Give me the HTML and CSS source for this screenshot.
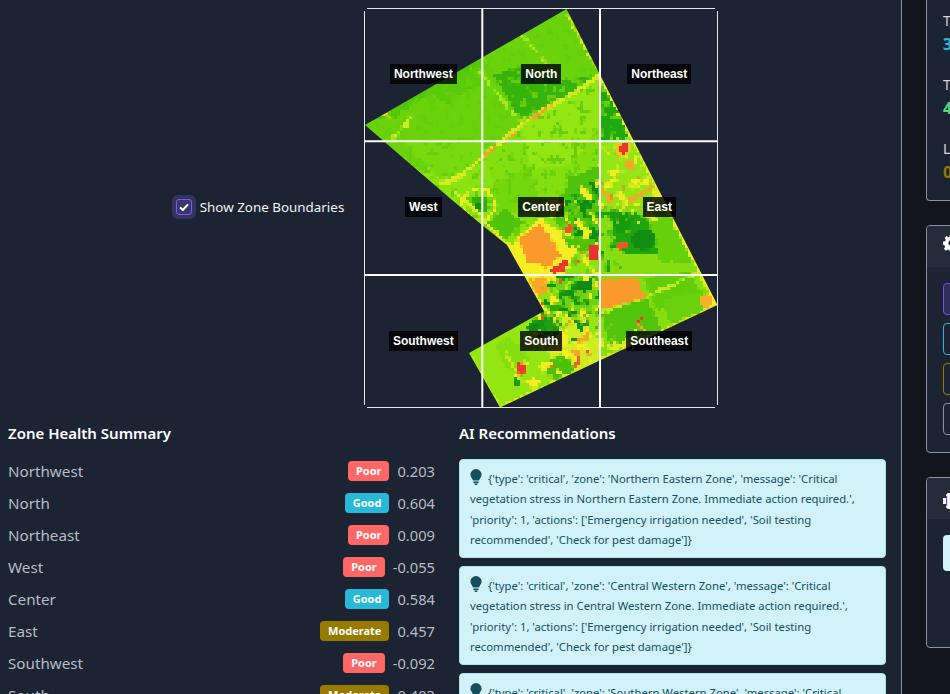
FILE: index.html
```html
<!DOCTYPE html>
<html>
<head>
    <link rel="stylesheet" href="styles.css">
</head>
<body>
    <div class="page">
        <main class="main">
            <div class="map-row">
                <label class="check-label">
                    <span class="check-halo">
                        <span class="check-box">
                            <svg width="10" height="8" viewBox="0 0 10 8"><path d="M1 4.2 3.8 7 9 1.4" fill="none" stroke="#fff" stroke-width="2"/></svg>
                        </span>
                    </span>
                    Show Zone Boundaries
                </label>

                <div class="map-box">
                    <svg class="map-svg" width="354" height="400" viewBox="364 8 354 400">
                        <defs>
                            <clipPath id="field">
                                <polygon points="566.5,9 717.5,305 500,407.5 469,353 544,311 507,245 482,225 452,200 365,125"/>
                            </clipPath>
                            <filter id="rough" x="364" y="8" width="354" height="400" filterUnits="userSpaceOnUse" color-interpolation-filters="sRGB">
                                <feTurbulence type="fractalNoise" baseFrequency="0.16" numOctaves="2" seed="4" result="n"/>
                                <feDisplacementMap in="SourceGraphic" in2="n" scale="6" xChannelSelector="R" yChannelSelector="G" result="d"/>
                                <feFlood x="365" y="9" width="1" height="1"/>
                                <feComposite width="3" height="3"/>
                                <feTile result="t"/>
                                <feComposite in="d" in2="t" operator="in"/>
                                <feMorphology operator="dilate" radius="1"/>
                            </filter>
                            <filter id="fleck" x="364" y="8" width="354" height="400" filterUnits="userSpaceOnUse" color-interpolation-filters="sRGB">
                                <feTurbulence type="fractalNoise" baseFrequency="0.14" numOctaves="2" seed="11"/>
                                <feColorMatrix values="0 0 0 0 0  0 0 0 0 0  0 0 0 0 0  12 0 0 0 -7" result="m"/>
                                <feComposite in="SourceGraphic" in2="m" operator="in"/>
                            </filter>
                            <filter id="blotch-a" x="364" y="8" width="354" height="400" filterUnits="userSpaceOnUse" color-interpolation-filters="sRGB">
                                <feTurbulence type="fractalNoise" baseFrequency="0.1" numOctaves="2" seed="7"/>
                                <feColorMatrix values="0 0 0 0 0  0 0 0 0 0  0 0 0 0 0  12 0 0 0 -6.5" result="m"/>
                                <feComposite in="SourceGraphic" in2="m" operator="in"/>
                            </filter>
                            <filter id="blotch-b" x="364" y="8" width="354" height="400" filterUnits="userSpaceOnUse" color-interpolation-filters="sRGB">
                                <feTurbulence type="fractalNoise" baseFrequency="0.1" numOctaves="2" seed="23"/>
                                <feColorMatrix values="0 0 0 0 0  0 0 0 0 0  0 0 0 0 0  12 0 0 0 -6.4" result="m"/>
                                <feComposite in="SourceGraphic" in2="m" operator="in"/>
                            </filter>
                            <filter id="blotch-c" x="364" y="8" width="354" height="400" filterUnits="userSpaceOnUse" color-interpolation-filters="sRGB">
                                <feTurbulence type="fractalNoise" baseFrequency="0.14" numOctaves="1" seed="31"/>
                                <feColorMatrix values="0 0 0 0 0  0 0 0 0 0  0 0 0 0 0  14 0 0 0 -9.6" result="m"/>
                                <feComposite in="SourceGraphic" in2="m" operator="in"/>
                            </filter>
                        </defs>
                        <g clip-path="url(#field)">
                            <g filter="url(#rough)">
                                <rect x="360" y="4" width="362" height="408" fill="#8be312"/>

                                <!-- north fields -->
                                <polygon points="360,128 570,4 600,72 480,160 420,170" fill="#6ad30b"/>
                                <polygon points="372,118 480,56 484,66 420,100 392,118" fill="#52c60a"/>
                                <polygon points="493,77 520,66 560,82 590,76 575,92 520,120" fill="#36b40c"/>
                                <polygon points="425,88 480,66 482,82 445,105" fill="#5acb0a"/>
                                <polygon points="598,76 636,140 603,140" fill="#1fa80f"/>
                                <polyline points="566,10 580,38 598,70" fill="none" stroke="#d8ec24" stroke-width="3"/>
                                <polyline points="522,36 552,70" fill="none" stroke="#a6ea1c" stroke-width="3"/>
                                <polyline points="478,70 520,122" fill="none" stroke="#a6ea1c" stroke-width="3"/>
                                <polyline points="412,115 402,130 392,138" fill="none" stroke="#cfee22" stroke-width="4"/>
                                <polyline points="384,113 392,120" fill="none" stroke="#f0d020" stroke-width="3"/>

                                <!-- center fields -->
                                <polygon points="484,150 600,80 600,175 540,222 500,210" fill="#84df10"/>
                                <polygon points="520,120 600,80 600,125 570,165 530,170" fill="#93e612"/>
                                <polygon points="400,140 480,140 480,165 440,180" fill="#78da0e"/>
                                <polygon points="484,190 530,165 540,205 500,215" fill="#72d80c"/>

                                <!-- noise over the whole field -->
                                <g filter="url(#fleck)">
                                    <rect x="360" y="4" width="362" height="408" fill="#66ce0c"/>
                                </g>

                                <!-- road -->
                                <polyline points="600,76 575,92 553,104 520,126 493,148 458,178 440,184" fill="none" stroke="#d8ec20" stroke-width="4"/>
                                <polyline points="552,105 524,124" fill="none" stroke="#fa9a2a" stroke-width="2.5"/>
                                <polyline points="515,132 505,139" fill="none" stroke="#fa9a2a" stroke-width="2.5"/>
                                <polyline points="495,148 485,156" fill="none" stroke="#fa9a2a" stroke-width="2.5"/>

                                <circle cx="479" cy="205" r="16" fill="none" stroke="#e6ee22" stroke-width="2.5"/>
                                <circle cx="479" cy="205" r="9" fill="#2fae0c"/>
                                <circle cx="477" cy="205" r="3" fill="#0f8f12"/>
                                <polygon points="484,225 505,208 522,222 505,240" fill="#50c40b"/>
                                <polyline points="454,192 470,204 488,224 507,245" fill="none" stroke="#e6ee22" stroke-width="3"/>

                                <!-- center south, stressed -->
                                <polygon points="570,178 600,165 600,250 570,250 552,215" fill="#4fc20b"/>
                                <polygon points="515,240 540,218 560,232 575,255 565,275 528,292 510,255" fill="#f4ee22"/>
                                <polygon points="518,240 540,224 562,255 545,268 528,262" fill="#fa9a2a"/>
                                <polygon points="552,266 568,260 566,274 552,274" fill="#f0362a"/>
                                <polygon points="527,279 545,276 549,292 536,296" fill="#f7a62a"/>
                                <polygon points="546,300 575,298 570,330 555,325" fill="#2cab0c"/>
                                <polygon points="560,275 600,275 600,310 575,318 552,300" fill="#6ed40c"/>

                                <!-- east -->
                                <polygon points="600,140 634,138 668,205 640,212 600,215" fill="#93e516"/>
                                <polygon points="600,205 680,205 704,272 600,275" fill="#86de10"/>
                                <polygon points="650,222 668,208 700,262 660,262" fill="#66d00b"/>
                                <polygon points="610,220 630,212 648,218 660,255 620,252" fill="#1fa50f"/>
                                <circle cx="643" cy="240" r="11" fill="#108d12"/>
                                <circle cx="622" cy="222" r="10" fill="#159a10"/>

                                <!-- south east fields -->
                                <polygon points="600,275 705,272 725,305 600,360" fill="#86de10"/>
                                <polygon points="644,278 690,272 703,296 655,310" fill="#62cd0b"/>
                                <polygon points="600,313 648,300 662,330 610,345" fill="#52c40b"/>
                                <polygon points="662,300 703,290 708,310 670,325" fill="#6ad20c"/>
                                <polyline points="600,313 648,296 704,270" fill="none" stroke="#c4ec20" stroke-width="2.5"/>
                                <polygon points="600,280 637,276 645,297 600,311" fill="#fa9a2a"/>
                                <polygon points="700,298 712,290 720,306 704,312" fill="#f7b028"/>

                                <!-- south fields -->
                                <polygon points="466,352 544,310 600,316 602,360 500,410" fill="#93e612"/>
                                <polygon points="540,340 570,312 600,340 600,362 570,378 560,370" fill="#cfec20"/>
                                <polygon points="528,322 552,312 565,328 545,335" fill="#1e9f10"/>
                                <polygon points="495,345 510,336 530,360 510,372" fill="#84de10"/>
                                <polygon points="545,362 565,352 575,372 552,385" fill="#4cc00b"/>
                                <polyline points="505,352 522,380" fill="none" stroke="#c8ec20" stroke-width="2.5"/>

                                <!-- patchy stress areas -->
                                <g filter="url(#blotch-a)">
                                    <polygon points="600,140 640,150 668,205 600,205" fill="#eeee22"/>
                                    <polygon points="545,205 600,175 600,275 575,272" fill="#f2ee22"/>
                                    <polygon points="545,275 600,275 600,360 540,390 510,385 530,340" fill="#f2ee22"/>
                                    <polygon points="600,320 660,335 600,362" fill="#e0ec22"/>
                                    <polygon points="600,205 650,205 660,225 610,235" fill="#e8ee22"/>
                                </g>
                                <g filter="url(#blotch-b)">
                                    <polygon points="560,190 600,180 600,240 575,235" fill="#0f8f12"/>
                                    <polygon points="545,275 600,275 600,340 530,345" fill="#129412"/>
                                    <polygon points="600,205 620,205 620,270 600,270" fill="#1a9f10"/>
                                </g>
                                <g filter="url(#blotch-c)">
                                    <polygon points="540,270 600,240 600,360 540,380" fill="#f0502a"/>
                                    <polygon points="600,140 660,175 620,210 600,200" fill="#f08028"/>
                                </g>

                                <!-- single hot spots -->
                                <rect x="616" y="143" width="14" height="13" fill="#f7c020"/>
                                <rect x="620" y="145" width="7" height="8" fill="#e8362a"/>
                                <circle cx="630" cy="165" r="5" fill="#f7a62a"/>
                                <polyline points="600,190 608,195 610,207" fill="none" stroke="#f7a62a" stroke-width="3"/>
                                <polyline points="628,202 650,188 655,178" fill="none" stroke="#f7a62a" stroke-width="3"/>
                                <rect x="590" y="245" width="9" height="14" fill="#ee2f2f"/>
                                <rect x="566" y="226" width="5" height="8" fill="#f3552a"/>
                                <rect x="616" y="243" width="12" height="6" fill="#f3552a"/>
                                <rect x="637" y="318" width="4" height="8" fill="#ee3a2a"/>
                                <polyline points="640,324 645,332" fill="none" stroke="#f7b028" stroke-width="3"/>
                                <polygon points="518,362 528,368 522,376 516,374" fill="#ee3a2a"/>
                                <polyline points="578,342 590,334" fill="none" stroke="#f7a62a" stroke-width="3"/>
                                <rect x="572" y="350" width="8" height="6" fill="#f7a62a"/>
                                <rect x="576" y="358" width="5" height="6" fill="#f0602a"/>
                                <rect x="514" y="378" width="5" height="8" fill="#1a9f10"/>
                                <polygon points="527,325 538,322 538,332 528,332" fill="#0f8a14"/>
                                <polygon points="575,282 590,280 592,290 578,292" fill="#0f8a14"/>

                                <!-- yellow rim of the field -->
                                <polyline points="598,72 634,140 680,232 717,305" fill="none" stroke="#eef02a" stroke-width="4"/>
                                <polyline points="717,305 600,360 500,407" fill="none" stroke="#dcec24" stroke-width="2"/>
                                <polyline points="507,245 544,311" fill="none" stroke="#f2ee22" stroke-width="4"/>
                                <polyline points="500,407 469,353" fill="none" stroke="#b8ea1c" stroke-width="2"/>
                            </g>
                        </g>

                        <g class="zone-lines">
                            <line x1="482.3" y1="8" x2="482.3" y2="408"/>
                            <line x1="600" y1="8" x2="600" y2="408"/>
                            <line x1="364" y1="141.2" x2="718" y2="141.2"/>
                            <line x1="364" y1="275" x2="718" y2="275"/>
                        </g>
                        <g class="frame-lines">
                            <line x1="367" y1="8.5" x2="715" y2="8.5"/>
                            <line x1="367" y1="407.5" x2="715" y2="407.5"/>
                            <line x1="364.5" y1="11" x2="364.5" y2="405"/>
                            <line x1="717.5" y1="11" x2="717.5" y2="405"/>
                        </g>
                    </svg>
                    <div class="zone-grid">
                        <span class="zone-label">Northwest</span>
                        <span class="zone-label">North</span>
                        <span class="zone-label">Northeast</span>
                        <span class="zone-label">West</span>
                        <span class="zone-label">Center</span>
                        <span class="zone-label">East</span>
                        <span class="zone-label">Southwest</span>
                        <span class="zone-label">South</span>
                        <span class="zone-label">Southeast</span>
                    </div>
                </div>
            </div>

            <div class="columns">
                <section>
                    <h3>Zone Health Summary</h3>
                    <div class="zone-row"><span class="zone-name">Northwest</span><span class="badge poor">Poor</span><span class="zone-value">0.203</span></div>
                    <div class="zone-row"><span class="zone-name">North</span><span class="badge good">Good</span><span class="zone-value">0.604</span></div>
                    <div class="zone-row"><span class="zone-name">Northeast</span><span class="badge poor">Poor</span><span class="zone-value">0.009</span></div>
                    <div class="zone-row"><span class="zone-name">West</span><span class="badge poor">Poor</span><span class="zone-value">-0.055</span></div>
                    <div class="zone-row"><span class="zone-name">Center</span><span class="badge good">Good</span><span class="zone-value">0.584</span></div>
                    <div class="zone-row"><span class="zone-name">East</span><span class="badge moderate">Moderate</span><span class="zone-value">0.457</span></div>
                    <div class="zone-row"><span class="zone-name">Southwest</span><span class="badge poor">Poor</span><span class="zone-value">-0.092</span></div>
                    <div class="zone-row"><span class="zone-name">South</span><span class="badge moderate">Moderate</span><span class="zone-value">0.403</span></div>
                </section>
                <section>
                    <h3>AI Recommendations</h3>
                    <div class="alert">
                        <svg class="bulb" width="12" height="16" viewBox="0 0 12 16"><path d="M6 0a5.6 5.6 0 0 0-5.6 5.6c0 2.6 1.9 3.6 2.6 6h6c.7-2.4 2.6-3.4 2.6-6A5.6 5.6 0 0 0 6 0zM3.4 12.6h5.2v1.3H3.4zM4.2 14.6h3.6L7 16H5z" fill="#14505f"/></svg>
                        {'type': 'critical', 'zone': 'Northern Eastern Zone', 'message': 'Critical vegetation stress in Northern Eastern Zone. Immediate action required.', 'priority': 1, 'actions': ['Emergency irrigation needed', 'Soil testing recommended', 'Check for pest damage']}
                    </div>
                    <div class="alert">
                        <svg class="bulb" width="12" height="16" viewBox="0 0 12 16"><path d="M6 0a5.6 5.6 0 0 0-5.6 5.6c0 2.6 1.9 3.6 2.6 6h6c.7-2.4 2.6-3.4 2.6-6A5.6 5.6 0 0 0 6 0zM3.4 12.6h5.2v1.3H3.4zM4.2 14.6h3.6L7 16H5z" fill="#14505f"/></svg>
                        {'type': 'critical', 'zone': 'Central Western Zone', 'message': 'Critical vegetation stress in Central Western Zone. Immediate action required.', 'priority': 1, 'actions': ['Emergency irrigation needed', 'Soil testing recommended', 'Check for pest damage']}
                    </div>
                    <div class="alert">
                        <svg class="bulb" width="12" height="16" viewBox="0 0 12 16"><path d="M6 0a5.6 5.6 0 0 0-5.6 5.6c0 2.6 1.9 3.6 2.6 6h6c.7-2.4 2.6-3.4 2.6-6A5.6 5.6 0 0 0 6 0zM3.4 12.6h5.2v1.3H3.4zM4.2 14.6h3.6L7 16H5z" fill="#14505f"/></svg>
                        {'type': 'critical', 'zone': 'Southern Western Zone', 'message': 'Critical vegetation stress in Southern Western Zone. Immediate action required.', 'priority': 1, 'actions': ['Emergency irrigation needed', 'Soil testing recommended', 'Check for pest damage']}
                    </div>
                </section>
            </div>
        </main>

        <aside class="side">
            <div class="card card-stats">
                <div class="stat"><div class="stat-label">Total Zones</div><div class="stat-value cyan">3.2</div></div>
                <div class="stat"><div class="stat-label">Top Zone</div><div class="stat-value green">4.1</div></div>
                <div class="stat"><div class="stat-label">Low Zone</div><div class="stat-value olive">0.2</div></div>
            </div>

            <div class="card">
                <div class="card-head">
                    <svg width="16" height="16" viewBox="0 0 16 16"><path d="M6.6 0h2.8l.4 2.2 1.4.6 1.9-1.3 2 2-1.3 1.9.6 1.4 2.1.4v2.8l-2.1.4-.6 1.4 1.3 1.9-2 2-1.9-1.3-1.4.6-.4 2.1H6.6l-.4-2.1-1.4-.6-1.9 1.3-2-2 1.3-1.9-.6-1.4L0 9.4V6.6l2.2-.4.6-1.4-1.3-1.9 2-2 1.9 1.3 1.4-.6zM8 5.4a2.6 2.6 0 1 0 0 5.2 2.6 2.6 0 0 0 0-5.2z" fill="#fff" fill-rule="evenodd"/></svg>
                </div>
                <div class="card-body buttons">
                    <div class="side-btn purple"></div>
                    <div class="side-btn teal"></div>
                    <div class="side-btn yellow"></div>
                    <div class="side-btn gray"></div>
                </div>
            </div>

            <div class="card card-ai">
                <div class="card-head">
                    <svg width="16" height="16" viewBox="0 0 16 16"><rect x="0" y="5" width="3" height="6" fill="#fff"/><rect x="3" y="0" width="13" height="16" rx="3" fill="#fff"/><rect x="3" y="3" width="1.2" height="10" fill="#8b3fd0"/></svg>
                </div>
                <div class="card-body">
                    <div class="side-note"></div>
                </div>
            </div>
        </aside>
    </div>
</body>
</html>
```

FILE: styles.css
```css
html, body {
    margin: 0;
    height: 694px;
    overflow: hidden;
}

body {
    background-color: #1c2333;
    color: #fff;
    font-family: "Noto Sans", "Open Sans", sans-serif;
}

.page {
    display: flex;
    height: 694px;
    overflow: hidden;
}

/* main column */
.main {
    flex: 0 0 901px;
    box-sizing: border-box;
    padding: 8px 15px 0 8px;
}

.map-row {
    display: flex;
    justify-content: center;
    align-items: center;
    gap: 20px;
    height: 400px;
    margin-right: 4px;
}

.check-label {
    display: flex;
    align-items: center;
    gap: 4px;
    margin-bottom: 2px;
    font-size: 13.4px;
    color: #f2f3f5;
}

.check-halo {
    display: flex;
    align-items: center;
    justify-content: center;
    width: 24px;
    height: 24px;
    border-radius: 6px;
    background-color: #36325f;
}

.check-box {
    display: flex;
    align-items: center;
    justify-content: center;
    box-sizing: border-box;
    width: 16px;
    height: 16px;
    border: 1px solid #7c5cf0;
    border-radius: 3px;
    background-color: #3a3670;
}

/* map */
.map-box {
    position: relative;
    width: 354px;
    height: 400px;
}

.map-svg {
    display: block;
}

.zone-lines line {
    stroke: #fff;
    stroke-width: 2;
}

.frame-lines line {
    stroke: #e6e7ea;
    stroke-width: 1;
}

.zone-grid {
    position: absolute;
    top: 0;
    left: 0;
    right: 0;
    bottom: 0;
    display: grid;
    grid-template-columns: 118px 118px 118px;
    grid-template-rows: 132px 134px 134px;
    justify-items: center;
    align-items: center;
}

.zone-label {
    padding: 3px 4px;
    background-color: rgba(0, 0, 0, 0.8);
    color: #fff;
    font-family: "Liberation Sans", Arial, sans-serif;
    font-size: 12px;
    font-weight: bold;
    line-height: 14px;
}

/* bottom columns */
.columns {
    display: grid;
    grid-template-columns: 427px 427px;
    gap: 24px;
    margin-top: 14px;
}

h3 {
    margin: 0 0 11px 0;
    font-size: 15px;
    font-weight: 600;
    line-height: 22px;
    color: #fff;
}

.zone-row {
    display: flex;
    align-items: center;
    height: 32px;
    color: #b9bcc4;
}

.zone-name {
    flex: 1;
    font-size: 15.2px;
}

.zone-value {
    margin-left: 8px;
    font-size: 14.7px;
}

.badge {
    padding: 0 8px;
    height: 20px;
    border-radius: 4px;
    color: #fff;
    font-size: 11px;
    font-weight: bold;
    line-height: 20px;
}

.poor {
    background-color: #ff6666;
}

.good {
    background-color: #2ab8d8;
}

.moderate {
    background-color: #997a00;
}

h3 + .alert {
    margin-top: 15px;
}

.alert {
    box-sizing: border-box;
    height: 99px;
    margin-bottom: 8px;
    padding: 9px 10px;
    border: 1px solid #a8e3f0;
    border-radius: 4px;
    background-color: #d1f2f9;
    color: #14505f;
    font-size: 11.3px;
    line-height: 20.4px;
}

.bulb {
    margin-right: 3px;
    vertical-align: -2px;
}

/* right side */
.side {
    flex: 0 0 300px;
    box-sizing: border-box;
    padding-left: 24px;
    border-left: 1px solid #8d92a3;
    background-color: #12151c;
}

.card {
    box-sizing: border-box;
    width: 260px;
    margin-bottom: 24px;
    border: 1px solid #8d92a3;
    border-radius: 4px;
    background-color: #1c2333;
    overflow: hidden;
}

.card-stats {
    height: 201px;
    padding: 9px 16px 0 16px;
    border-top: none;
    border-radius: 0 0 4px 4px;
}

.stat {
    height: 64px;
}

.stat-label {
    font-size: 14px;
    line-height: 24px;
    color: #d5d7dc;
}

.stat-value {
    font-size: 16px;
    font-weight: bold;
    line-height: 22px;
}

.cyan {
    color: #2ab8d8;
}

.green {
    color: #55d97a;
}

.olive {
    color: #997a00;
}

.card-head {
    height: 41px;
    box-sizing: border-box;
    padding: 8px 16px;
    background-color: #262b3a;
}

.card-ai .card-head {
    padding-top: 14px;
}

.card-body {
    padding: 16px;
}

.buttons {
    display: flex;
    flex-direction: column;
    gap: 8px;
    height: 185px;
    box-sizing: border-box;
}

.side-btn {
    height: 32px;
    border: 1px solid #8d92a3;
    border-radius: 4px;
    box-sizing: border-box;
}

.side-btn.purple {
    border-color: #6f55d8;
    background-color: #302c5c;
}

.side-btn.teal {
    border-color: #2ab8d8;
}

.side-btn.yellow {
    border-color: #997a00;
}

.card-ai {
    height: 171px;
}

.side-note {
    height: 36px;
    border-radius: 4px;
    background-color: #d1f2f9;
}
```
